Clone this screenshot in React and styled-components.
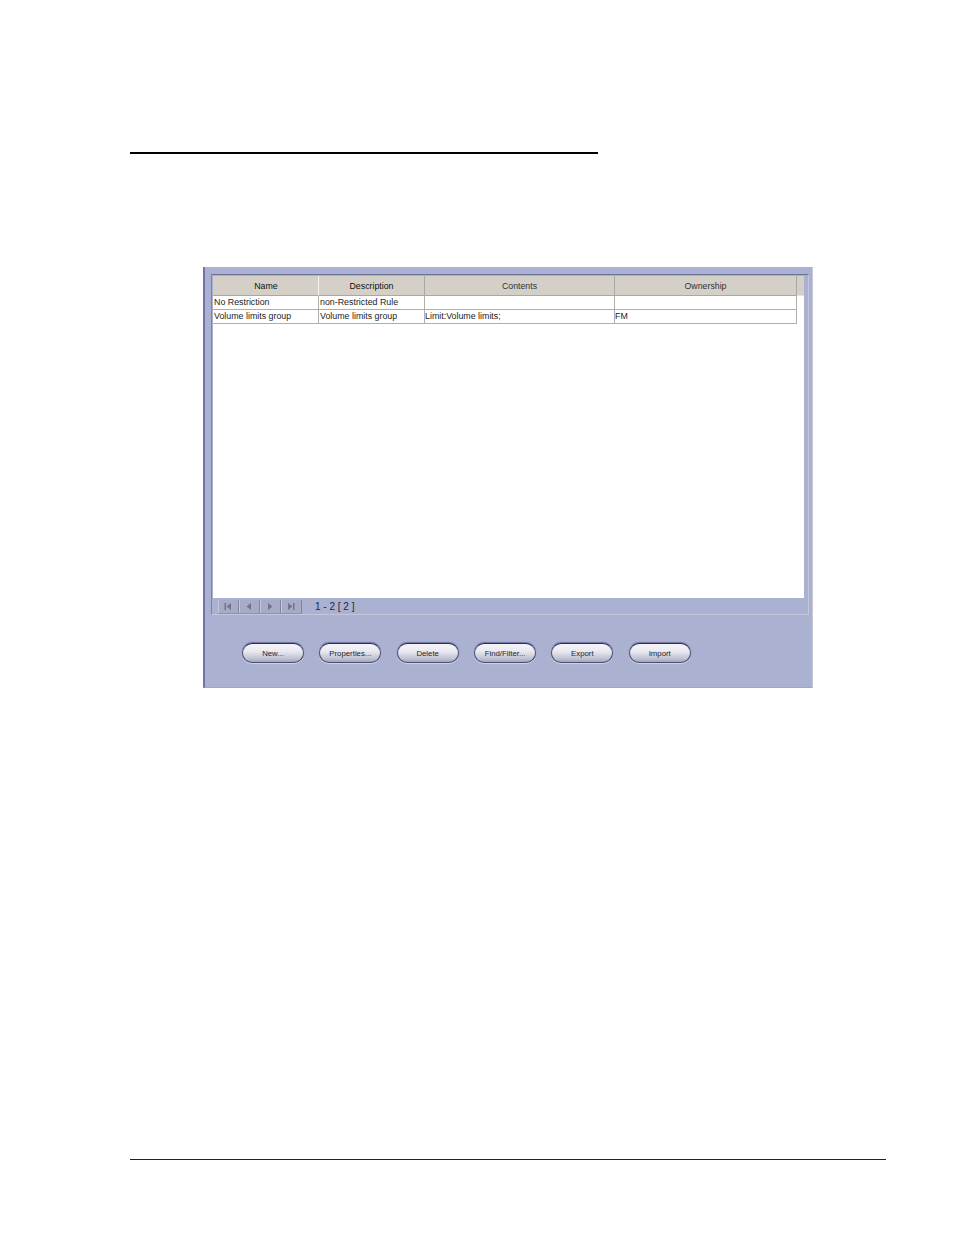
import React from 'react';
import styled, { createGlobalStyle } from 'styled-components';

const GlobalStyle = createGlobalStyle`
  html, body {
    margin: 0;
    padding: 0;
    background: #fff;
    font-family: "Liberation Sans", Arial, sans-serif;
  }
`;

const Page = styled.div`
  width: 954px;
  height: 1235px;
  padding: 152px 68px 0 130px;
  box-sizing: border-box;
  overflow: hidden;
`;

const TopRule = styled.div`
  width: 468px;
  height: 2px;
  background: #000;
`;

const Panel = styled.div`
  width: 610px;
  height: 421px;
  margin: 113px 0 0 73px;
  padding: 7px 3px 0 6px;
  box-sizing: border-box;
  background: #abb1d1;
  border-left: 2px solid #6d74a6;
  border-bottom: 1px solid #a9a9ad;
  border-right: 1px solid #c4c8d8;
`;

const Frame = styled.div`
  height: 341px;
  box-sizing: border-box;
  padding: 1px 4px 0 1px;
  border-top: 1px solid #6d7299;
  border-left: 1px solid #7d82a3;
  border-right: 1px solid #c3c7da;
  border-bottom: 1px solid #c3c7da;
  display: flex;
  flex-direction: column;
`;

const TableArea = styled.div`
  height: 322px;
  background: #fff;
  flex: none;
`;

const Row = styled.div`
  display: grid;
  grid-template-columns: 106px 106px 190px 182px 1fr;
  height: ${p => p.$height}px;
  box-sizing: border-box;
`;

const HeadCell = styled.div`
  background: #d4d0c8;
  border-right: 1px solid ${p => (p.$light ? '#f4f3f0' : '#a9a8a4')};
  border-bottom: 1px solid #a9a8a4;
  display: flex;
  align-items: center;
  justify-content: center;
  padding-left: ${p => (p.$light ? '1px' : '0')};
  font-size: 8.8px;
  color: ${p => p.$color || '#111'};
`;

const HeadFiller = styled.div`
  background: #d4d0c8;
  border-bottom: 1px solid #e6e4df;
`;

const Cell = styled.div`
  border-right: 1px solid #aeaeae;
  border-bottom: 1px solid #aeaeae;
  padding-left: ${p => p.$indent}px;
  line-height: 13px;
  font-size: 8.85px;
  color: #1c1c1c;
  white-space: nowrap;
  overflow: hidden;
`;

const Pager = styled.div`
  flex: 1;
  display: flex;
  align-items: center;
  padding: 1px 0 0 5px;
`;

const PagerButtons = styled.div`
  display: flex;
  height: 13px;
  border-bottom: 1px solid #8e93b4;
`;

const PagerButton = styled.div`
  width: 21px;
  box-sizing: border-box;
  padding-right: 2px;
  display: flex;
  align-items: center;
  justify-content: center;
  background: #a6abc8;
  border-right: 1px solid #8084a6;
  border-left: 1px solid #c6c9dc;
  color: #70748f;
`;

const PagerText = styled.div`
  margin-left: 13px;
  font-size: 10px;
  letter-spacing: 0.2px;
  word-spacing: -0.4px;
  color: #23253d;
  white-space: pre;
`;

const ButtonRow = styled.div`
  display: flex;
  gap: 15.35px;
  padding: 28px 0 0 31px;
`;

const PillButton = styled.button`
  width: 62px;
  height: 20px;
  padding: 0;
  flex: none;
  border-radius: 10px;
  border: 1px solid #4a4f72;
  border-top: 1.5px solid #272b63;
  background: linear-gradient(#f4f4f8 0%, #e9e9f0 40%, #c2c3d4 80%, #a3a5bd 100%);
  box-shadow: 0 -1px 1px rgba(39, 43, 99, 0.45), 0 1px 1px #d5d8e8;
  font-family: "Liberation Sans", Arial, sans-serif;
  font-size: 7.8px;
  color: #1e1e2a;
`;

const BottomRule = styled.div`
  width: 756px;
  height: 1px;
  margin-top: 471px;
  background: #222;
`;

const PagerIcon = ({ type }) => {
  const paths = {
    first: <><rect x="1.5" y="1" width="1.5" height="7" /><path d="M8 1v7L3.5 4.5z" /></>,
    prev: <path d="M7 1v7L2.5 4.5z" />,
    next: <path d="M3 1v7l4.5-3.5z" />,
    last: <><rect x="7" y="1" width="1.5" height="7" /><path d="M2 1v7l4.5-3.5z" /></>,
  };
  return (
    <svg width="10" height="9" viewBox="0 0 10 9" fill="currentColor">
      {paths[type]}
    </svg>
  );
};

const columns = ['Name', 'Description', 'Contents', 'Ownership'];

const rows = [
  ['No Restriction', 'non-Restricted Rule', '', ''],
  ['Volume limits group', 'Volume limits group', 'Limit:Volume limits;', 'FM'],
];

const buttons = ['New...', 'Properties...', 'Delete', 'Find/Filter...', 'Export', 'Import'];

export default function App() {
  return (
    <Page>
      <GlobalStyle />
      <TopRule />
      <Panel>
        <Frame>
          <TableArea>
            <Row $height={20}>
              {columns.map((col, i) => (
                <HeadCell key={col} $light={i === 0} $color={i > 1 ? '#333' : undefined}>
                  {col}
                </HeadCell>
              ))}
              <HeadFiller />
            </Row>
            {rows.map(row => (
              <Row key={row[0]} $height={14}>
                {row.map((text, i) => (
                  <Cell key={i} $indent={i < 2 ? 1 : 0}>{text}</Cell>
                ))}
              </Row>
            ))}
          </TableArea>
          <Pager>
            <PagerButtons>
              {['first', 'prev', 'next', 'last'].map(type => (
                <PagerButton key={type}>
                  <PagerIcon type={type} />
                </PagerButton>
              ))}
            </PagerButtons>
            <PagerText>1 - 2 [ 2 ]</PagerText>
          </Pager>
        </Frame>
        <ButtonRow>
          {buttons.map(label => (
            <PillButton key={label}>{label}</PillButton>
          ))}
        </ButtonRow>
      </Panel>
      <BottomRule />
    </Page>
  );
}
